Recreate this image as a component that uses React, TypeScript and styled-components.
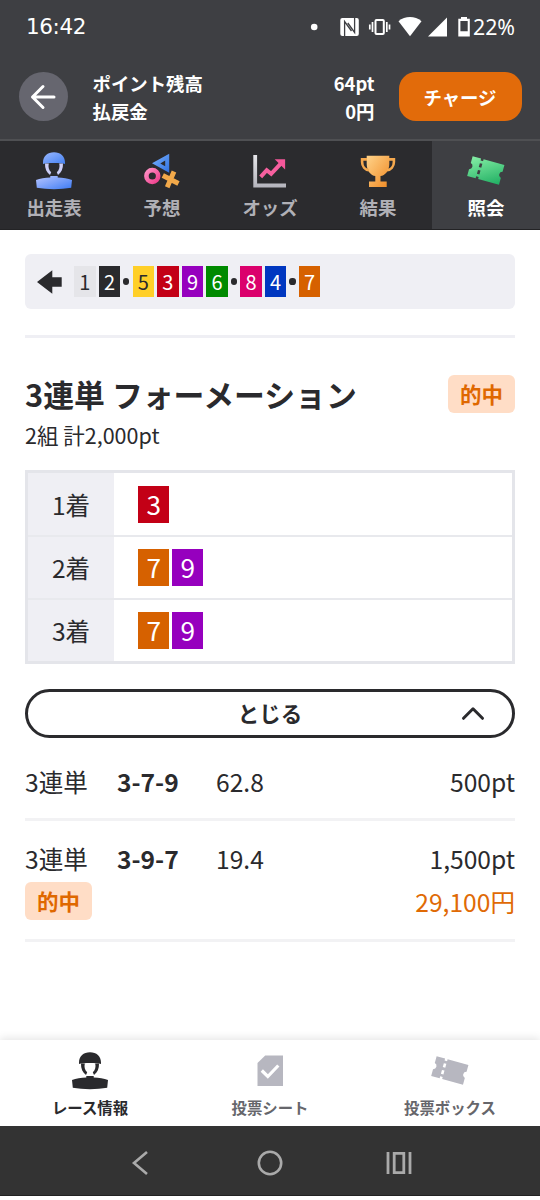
import React from "react";
import styled, { createGlobalStyle } from "styled-components";

const Global = createGlobalStyle`
  *, *::before, *::after { box-sizing: border-box; }
  body {
    margin: 0;
    background: #fff;
    color: #2a2a2d;
    font-family: "Noto Sans CJK JP", sans-serif;
  }
  svg { display: block; flex: none; }
  button { font-family: inherit; cursor: pointer; }
`;

const Screen = styled.div`
  width: 540px;
  height: 1200px;
  display: flex;
  flex-direction: column;
  overflow: hidden;
`;

const StatusBar = styled.div`
  height: 54px;
  padding: 0 25px 0 26px;
  display: flex;
  align-items: center;
  justify-content: space-between;
  background: #3e3f43;
  color: #fff;
`;

const Clock = styled.span`
  font: 400 21.5px/30px "DejaVu Sans", sans-serif;
  letter-spacing: -0.4px;
`;

const StatusIcons = styled.div`
  display: flex;
  align-items: center;
  gap: 3px;
`;

const Battery = styled.span`
  font: 400 21.3px/30px "Noto Sans", sans-serif;
  width: 42px;
`;

const Header = styled.header`
  height: 87px;
  padding: 0 18.5px 0;
  display: flex;
  align-items: center;
  background: #3e3f43;
  border-bottom: 2px solid #4f5053;
  color: #fff;
`;

const BackButton = styled.button`
  width: 49.5px;
  height: 49.5px;
  border: 0;
  padding: 0;
  border-radius: 50%;
  background: #66666f;
  display: grid;
  place-items: center;
`;

const Balances = styled.dl`
  flex: 1;
  margin: 1px 24px 0 24.5px;
  font-size: 18.4px;
  font-weight: 700;
  line-height: 28px;
`;

const BalanceRow = styled.div`
  display: flex;
  justify-content: space-between;
  dt, dd { margin: 0; }
`;

const ChargeButton = styled.button`
  width: 123px;
  height: 49.5px;
  padding: 0;
  border: 0;
  border-radius: 17px;
  background: #e26b0a;
  color: #fff;
  font-size: 18.4px;
  font-weight: 700;
`;

const Tabs = styled.nav`
  height: 89px;
  display: grid;
  grid-template-columns: repeat(5, 1fr);
  background: #2b2b2e;
`;

const Tab = styled.a<{ $active?: boolean }>`
  display: flex;
  flex-direction: column;
  align-items: center;
  padding-top: 10px;
  background: ${(p) => (p.$active ? "#3e3f43" : "transparent")};
  color: ${(p) => (p.$active ? "#fff" : "#b0b0b6")};
  font-size: 18.4px;
  font-weight: 700;
  line-height: 28px;
  border-bottom: 1px solid #232325;
  svg { margin-bottom: 2px; }
`;

const Main = styled.main`
  flex: 1;
  padding: 24px 25px 0;
`;

const LineUp = styled.div`
  height: 55px;
  padding: 0 12px;
  border-radius: 6px;
  background: #efeff4;
  display: flex;
  align-items: center;
  gap: 3.1px;
`;

const LineArrow = styled.svg`
  margin-right: 9px;
`;

const Dot = styled.i`
  width: 6.2px;
  height: 6.2px;
  border-radius: 50%;
  background: #2a2a2d;
`;

const CAR_COLORS: Record<number, [string, string]> = {
  1: ["#e5e5e9", "#2a2a2d"],
  2: ["#2a2a2d", "#fff"],
  3: ["#c30016", "#fff"],
  4: ["#0037c0", "#fff"],
  5: ["#ffcf28", "#2a2a2d"],
  6: ["#008a00", "#fff"],
  7: ["#d66100", "#fff"],
  8: ["#db006c", "#fff"],
  9: ["#9600be", "#fff"],
};

const CarChip = styled.span<{ $car: number; $large?: boolean }>`
  width: ${(p) => (p.$large ? "31px" : "21.5px")};
  height: ${(p) => (p.$large ? "37px" : "31px")};
  font-size: ${(p) => (p.$large ? "26.2px" : "20px")};
  line-height: ${(p) => (p.$large ? "37px" : "32px")};
  text-align: center;
  background: ${(p) => CAR_COLORS[p.$car][0]};
  color: ${(p) => CAR_COLORS[p.$car][1]};
`;

const Divider = styled.hr<{ $tone?: string }>`
  height: 3px;
  margin: 0;
  border: 0;
  background: ${(p) => p.$tone || "#f2f2f4"};
`;

const Ticket = styled.section`
  margin-top: 26px;
`;

const TicketHead = styled.div`
  margin-top: 37px;
  display: flex;
  align-items: center;
  justify-content: space-between;
`;

const Title = styled.h1`
  margin: 0;
  font-size: 30.85px;
  font-weight: 700;
  line-height: 38px;
`;

const HitBadge = styled.span`
  width: 67px;
  height: 38px;
  border-radius: 6px;
  background: #ffddc6;
  color: #df6800;
  font-size: 21.5px;
  font-weight: 700;
  line-height: 38px;
  text-align: center;
`;

const Summary = styled.p`
  margin: 6px 0 0;
  font-size: 21.5px;
  line-height: 32px;
`;

const Formation = styled.div`
  margin-top: 19px;
  border: 3px solid #e4e5ea;
`;

const FormationRow = styled.div`
  height: 63px;
  display: flex;
  & + & { border-top: 2px solid #e8e9ed; }
  &:first-child { height: 62px; }
`;

const Place = styled.div`
  width: 86px;
  padding-bottom: 1px;
  background: #efeff4;
  display: grid;
  place-items: center;
  font-size: 24.6px;
`;

const Picks = styled.div`
  display: flex;
  align-items: center;
  gap: 3px;
  padding-left: 24.4px;
`;

const ToggleButton = styled.button`
  width: 100%;
  height: 49px;
  margin-top: 25px;
  padding: 0 27.5px;
  border: 3px solid #2a2a2d;
  border-radius: 25px;
  background: #fff;
  color: #2a2a2d;
  display: grid;
  grid-template-columns: 24px 1fr 24px;
  align-items: center;
  font-size: 21.5px;
  font-weight: 700;
`;

const ToggleLabel = styled.span`
  line-height: 32px;
  padding-bottom: 1px;
`;

const BetRow = styled.div<{ $first?: boolean }>`
  padding: ${(p) => (p.$first ? "24px 0 18px" : "18px 0 19px")};
  font-size: 24.6px;
  line-height: 38px;
`;

const BetLine = styled.div`
  display: flex;
  align-items: center;
`;

const BetKind = styled.span`
  width: 92px;
`;

const BetNumbers = styled.b`
  width: 99px;
  font-weight: 700;
`;

const BetStake = styled.span`
  margin-left: auto;
`;

const PayoutLine = styled.div`
  display: flex;
  justify-content: space-between;
  align-items: center;
  margin-top: 5px;
`;

const Payout = styled.span`
  color: #e06a05;
`;

const BottomNav = styled.nav`
  height: 86px;
  display: grid;
  grid-template-columns: repeat(3, 1fr);
  background: #fff;
  box-shadow: 0 -2px 8px rgba(0, 0, 0, 0.1);
`;

const BottomItem = styled.a<{ $active?: boolean }>`
  display: flex;
  flex-direction: column;
  align-items: center;
  padding-top: 11px;
  color: ${(p) => (p.$active ? "#2a2a2d" : "#66666b")};
  font-size: 15.4px;
  font-weight: 700;
  line-height: 24px;
  svg { margin-bottom: 4px; }
`;

const SystemNav = styled.div`
  height: 70px;
  margin-bottom: 4px;
  padding: 4px 128px 0 131px;
  display: flex;
  align-items: center;
  justify-content: space-between;
  background: #333;
  border-bottom: 1px solid #222;
`;

const JockeyIcon = ({ tint }: { tint?: string }) => (
  <svg width="40" height="40" viewBox="0 0 40 40">
    <defs>
      <linearGradient id="jockey" x1="0" y1="0" x2="1" y2="1">
        <stop offset="0" stopColor="#b9c6ff" />
        <stop offset="1" stopColor="#3d7bf4" />
      </linearGradient>
      <linearGradient id="helmet" x1="0" y1="0" x2="1" y2="1">
        <stop offset="0" stopColor="#9bb8ff" />
        <stop offset="1" stopColor="#4380f0" />
      </linearGradient>
    </defs>
    <path
      fill={tint || "url(#helmet)"}
      d="M9 12.900V11.500C9 5 13.500 1.200 20 1.200S31 5 31 11.500V12.900C27 11.800 13 11.800 9 12.900Z"
    />
    <path
      fill={tint || "#cdcff8"}
      d="M11 12.500H14.800C14 16 14.700 19 17.200 21.300L16 24C12.500 21.500 10.800 17.500 11 12.500ZM29 12.500H25.200C26 16 25.300 19 22.800 21.300L24 24C27.500 21.500 29.200 17.500 29 12.500Z"
    />
    <path
      fill={tint || "url(#jockey)"}
      d="M16.300 25H23.700V26.500C29 26.700 34 27.500 38 29L37.200 36.800C32 37.700 26 38.200 20 38.200S8 37.700 2.800 36.800L2 29C6 27.500 11 26.700 16.300 26.500Z"
    />
  </svg>
);

const PredictIcon = () => (
  <svg width="40" height="40" viewBox="0 -1 40 40">
    <defs>
      <linearGradient id="tri" x1="0" y1="0" x2="1" y2="1">
        <stop offset="0" stopColor="#7db4ff" />
        <stop offset="1" stopColor="#2f70e0" />
      </linearGradient>
      <linearGradient id="ring" x1="0" y1="0" x2="1" y2="1">
        <stop offset="0" stopColor="#ff8fc4" />
        <stop offset="1" stopColor="#ee3f8c" />
      </linearGradient>
    </defs>
    <path fill="url(#tri)" fillRule="evenodd" d="M10 11.300L27.200 1.700V20.800ZM18.300 11.400L23.200 14.300V8.500Z" />
    <circle cx="10.300" cy="24" r="5.900" fill="none" stroke="url(#ring)" strokeWidth="4.600" />
    <path d="M20.800 23.500L36.500 31.500M32 19.500L25.200 35.300" stroke="#f2a94a" strokeWidth="4.900" />
  </svg>
);

const OddsIcon = () => (
  <svg width="40" height="40" viewBox="-2 -1 40 40">
    <defs>
      <linearGradient id="axis" x1="0" y1="0" x2="0" y2="1">
        <stop offset="0" stopColor="#e6e6ea" />
        <stop offset="1" stopColor="#b4b4bc" />
      </linearGradient>
    </defs>
    <path fill="url(#axis)" d="M1.300 3H5.100V31.400H34V35.500H1.300Z" />
    <path d="M8.700 24.900L14.700 18.200L19.200 21.800L29 11.300" fill="none" stroke="#f7609f" strokeWidth="4" />
    <path fill="#f5579a" d="M22.700 7.200H33.100V17.500Z" />
  </svg>
);

const TrophyIcon = () => (
  <svg width="40" height="40" viewBox="-2 -3 40 40">
    <defs>
      <linearGradient id="cup" x1="0" y1="0" x2="1" y2="1">
        <stop offset="0" stopColor="#ffd38a" />
        <stop offset="1" stopColor="#f08a24" />
      </linearGradient>
    </defs>
    <path
      fill="url(#cup)"
      d="M6.700 1.700H29.300V10C29.300 17 25 21.500 20.500 22V27.500H26.700V33H9V27.500H15.300V22C11 21.500 6.700 17 6.700 10Z"
    />
    <path
      d="M7 5.400H2.100V8C2.100 12.500 5 15.600 9 16.300M29 5.400H33.900V8C33.900 12.500 31 15.600 27 16.300"
      fill="none"
      stroke="#f6a94e"
      strokeWidth="2.600"
    />
  </svg>
);

const TicketIcon = ({ tint }: { tint?: string }) => (
  <svg width="40" height="40" viewBox="0 -3 40 40">
    <defs>
      <linearGradient id="stub" x1="0" y1="0" x2="1" y2="1">
        <stop offset="0" stopColor="#86eea6" />
        <stop offset="1" stopColor="#1fae62" />
      </linearGradient>
    </defs>
    <path
      transform="translate(19.800 16.500) rotate(15.500) translate(-16.500 -10.200)"
      fill={tint || "url(#stub)"}
      fillRule="evenodd"
      d="M0 0H8.800V2H11.400V0H33V6.900A3.400 3.400 0 0 0 33 13.500V20.400H11.400V18.400H8.800V20.400H0V13.500A3.400 3.400 0 0 0 0 6.900ZM8.800 4.700V8.700H11.400V4.700ZM8.800 11.700V15.700H11.400V11.700Z"
    />
  </svg>
);

const SheetIcon = () => (
  <svg width="40" height="40" viewBox="0 0 40 40">
    <path fill="#b7b7c0" d="M15.200 4.500H33V35H7.500V12Z" />
    <path d="M11.800 19.500L17.800 25.500L28.300 14.500" fill="none" stroke="#fff" strokeWidth="3.200" />
  </svg>
);

const StatusGlyphs = () => (
  <svg width="160" height="24" viewBox="310 15 160 24" fill="#fff">
    <circle cx="314.200" cy="27" r="3.300" />
    <rect x="340.300" y="18" width="18.500" height="18" rx="2" />
    <path
      d="M344.600 36V21.500L351.500 31M347.800 23L354.600 32.500V18"
      fill="none"
      stroke="#3e3f43"
      strokeWidth="1.300"
    />
    <rect x="375.500" y="20" width="8.300" height="14" rx="1" fill="none" stroke="#fff" strokeWidth="2" />
    <path d="M372.500 22V32M369.800 24.500V29.500M386.800 22V32M389.500 24.500V29.500" stroke="#fff" strokeWidth="1.700" />
    <path d="M398.500 21.300C405 15.700 415 15.700 421.500 21.300L410 36.300Z" />
    <path d="M428 36.500L447 17.500V36.500Z" />
    <path d="M461 17H467V19.500H461Z" />
    <path fillRule="evenodd" d="M458.300 18.800H469.800V36.500H458.300ZM460.400 21V31.200H467.700V21Z" />
  </svg>
);

const LINE_UP: (number | null)[] = [1, 2, null, 5, 3, 9, 6, null, 8, 4, null, 7];

const FORMATION = [
  { place: "1着", cars: [3] },
  { place: "2着", cars: [7, 9] },
  { place: "3着", cars: [7, 9] },
];

const TABS = [
  { label: "出走表", icon: <JockeyIcon /> },
  { label: "予想", icon: <PredictIcon /> },
  { label: "オッズ", icon: <OddsIcon /> },
  { label: "結果", icon: <TrophyIcon /> },
  { label: "照会", icon: <TicketIcon />, active: true },
];

export default function App() {
  return (
    <>
      <Global />
      <Screen>
        <StatusBar>
          <Clock>16:42</Clock>
          <StatusIcons>
            <StatusGlyphs />
            <Battery>22%</Battery>
          </StatusIcons>
        </StatusBar>
        <Header>
          <BackButton aria-label="戻る">
            <svg width="26" height="26" viewBox="0 0 26 26" fill="none" stroke="#fff" strokeWidth="3" strokeLinecap="round" strokeLinejoin="round">
              <path d="M24 13H2.500M13 2.500L2.500 13L13 23.500" />
            </svg>
          </BackButton>
          <Balances>
            <BalanceRow>
              <dt>ポイント残高</dt>
              <dd>64pt</dd>
            </BalanceRow>
            <BalanceRow>
              <dt>払戻金</dt>
              <dd>0円</dd>
            </BalanceRow>
          </Balances>
          <ChargeButton>チャージ</ChargeButton>
        </Header>
        <Tabs>
          {TABS.map((t) => (
            <Tab key={t.label} $active={t.active}>
              {t.icon}
              {t.label}
            </Tab>
          ))}
        </Tabs>
        <Main>
          <LineUp>
            <LineArrow width="25" height="24" viewBox="0 0 25 24" fill="#2a2a2d">
              <path d="M0 12L15.300 0.300V7.200H24.700V16.800H15.300V23.700Z" />
            </LineArrow>
            {LINE_UP.map((car, i) =>
              car === null ? <Dot key={i} /> : <CarChip key={i} $car={car}>{car}</CarChip>
            )}
          </LineUp>
          <Ticket>
            <Divider $tone="#efeff4" />
            <TicketHead>
              <Title>3連単 フォーメーション</Title>
              <HitBadge>的中</HitBadge>
            </TicketHead>
            <Summary>2組 計2,000pt</Summary>
            <Formation>
              {FORMATION.map((row) => (
                <FormationRow key={row.place}>
                  <Place>{row.place}</Place>
                  <Picks>
                    {row.cars.map((car) => (
                      <CarChip key={car} $car={car} $large>{car}</CarChip>
                    ))}
                  </Picks>
                </FormationRow>
              ))}
            </Formation>
            <ToggleButton>
              <span />
              <ToggleLabel>とじる</ToggleLabel>
              <svg width="24" height="16" viewBox="0 0.700 24 16" fill="none" stroke="#2a2a2d" strokeWidth="3" strokeLinecap="round" strokeLinejoin="round">
                <path d="M2.500 13L12 3.500L21.500 13" />
              </svg>
            </ToggleButton>
            <BetRow $first>
              <BetLine>
                <BetKind>3連単</BetKind>
                <BetNumbers>3-7-9</BetNumbers>
                <span>62.8</span>
                <BetStake>500pt</BetStake>
              </BetLine>
            </BetRow>
            <Divider />
            <BetRow>
              <BetLine>
                <BetKind>3連単</BetKind>
                <BetNumbers>3-9-7</BetNumbers>
                <span>19.4</span>
                <BetStake>1,500pt</BetStake>
              </BetLine>
              <PayoutLine>
                <HitBadge>的中</HitBadge>
                <Payout>29,100円</Payout>
              </PayoutLine>
            </BetRow>
            <Divider />
          </Ticket>
        </Main>
        <BottomNav>
          <BottomItem $active>
            <JockeyIcon tint="#2a2a2d" />
            レース情報
          </BottomItem>
          <BottomItem>
            <SheetIcon />
            投票シート
          </BottomItem>
          <BottomItem>
            <TicketIcon tint="#b7b7c0" />
            投票ボックス
          </BottomItem>
        </BottomNav>
        <SystemNav>
          <svg width="22" height="26" viewBox="0 0 22 26" fill="none" stroke="#aaa" strokeWidth="2.600">
            <path d="M16 2L3 13L16 24" />
          </svg>
          <svg width="26" height="26" viewBox="0 0 26 26" fill="none" stroke="#aaa" strokeWidth="2.600">
            <circle cx="13" cy="13" r="11.200" />
          </svg>
          <svg width="26" height="24" viewBox="0 0 26 24" fill="none" stroke="#aaa" strokeWidth="2.800">
            <path d="M2 1V23M24 1V23M8.200 2.400H17.800V21.600H8.200Z" />
          </svg>
        </SystemNav>
      </Screen>
    </>
  );
}
